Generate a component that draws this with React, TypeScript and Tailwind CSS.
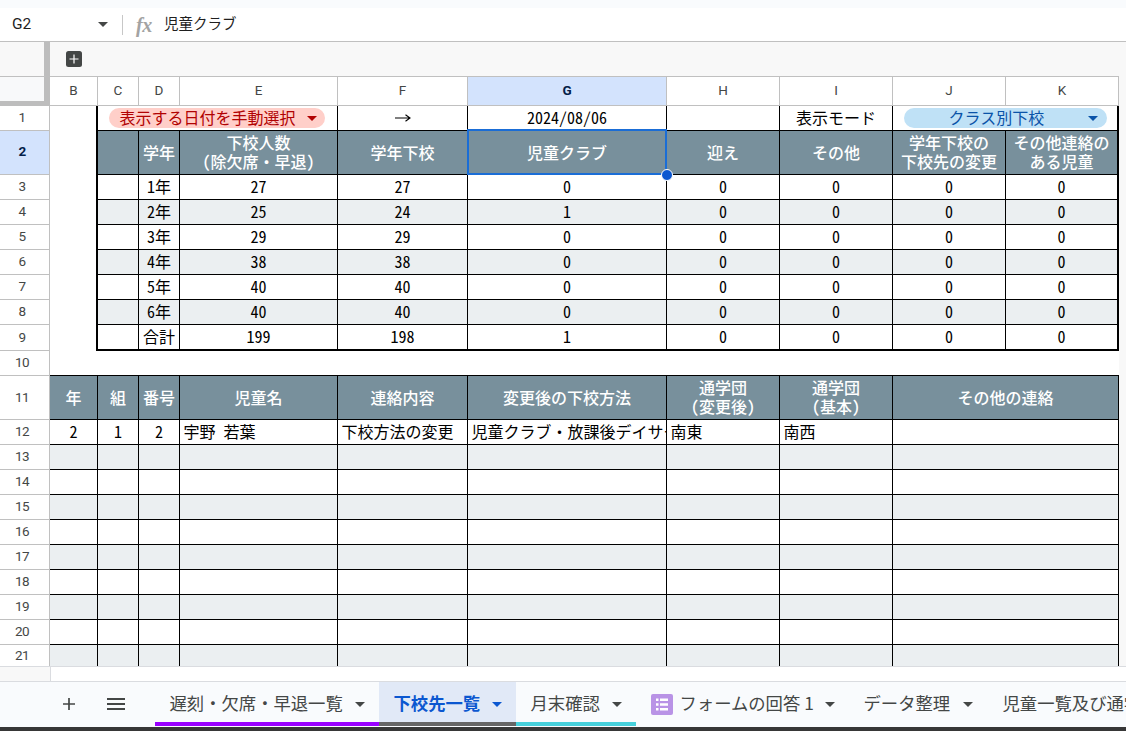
import React from "react";

type Align = "center" | "left";

const COLS =
  "grid grid-cols-[50px_48px_41px_41px_158px_130px_199px_113px_113px_113px_113px] w-[1119px] shrink-0";

const ROW_H = {
  normal: "h-[25px]",
  tall: "h-[44px]",
  total: "h-[26px]",
  last: "h-[21px]",
};

function Caret({ className = "" }: { className?: string }) {
  return (
    <svg viewBox="0 0 10 5" className={`h-[5px] w-[10px] shrink-0 ${className}`} fill="currentColor">
      <path d="M0 0h10L5 5z" />
    </svg>
  );
}

function RowHead({ n, selected = false, last = false }: { n: number; selected?: boolean; last?: boolean }) {
  return (
    <div
      className={`flex items-center justify-center border-r border-[#c0c0c0] pr-[5px] font-[Roboto,sans-serif] text-[13.5px] leading-none tracking-[-0.6px] ${
        last ? "pt-px" : "border-b"
      } ${selected ? "bg-[#d3e3fd] pb-[2px] font-bold text-[#041e49]" : "bg-white text-[#444746]"}`}
    >
      {n}
    </div>
  );
}

function Cell({
  children,
  align = "center",
  lift = true,
  className = "",
}: {
  children?: React.ReactNode;
  align?: Align;
  lift?: boolean;
  className?: string;
}) {
  return (
    <div
      className={`flex min-w-0 items-center overflow-hidden whitespace-nowrap border-black text-center text-[16px] leading-[19px] ${
        align === "center" ? "justify-center" : "justify-start pl-[3.5px]"
      } ${lift ? "pb-[2px]" : ""} ${className}`}
    >
      {children}
    </div>
  );
}

const HEAD_FILL = "bg-[#78909c] font-medium text-white";
const LINES = "border-r border-b";

function HeadCell({ children, className = "border-r border-b" }: { children?: React.ReactNode; className?: string }) {
  return (
    <Cell lift={false} className={`${HEAD_FILL} ${className}`}>
      {children}
    </Cell>
  );
}

function Two({ a, b }: { a: string; b: string }) {
  return (
    <span className="block pb-[2px]">
      {a}
      <br />
      {b}
    </span>
  );
}

const summary = [
  ["1年", "27", "27", "0", "0", "0", "0", "0"],
  ["2年", "25", "24", "1", "0", "0", "0", "0"],
  ["3年", "29", "29", "0", "0", "0", "0", "0"],
  ["4年", "38", "38", "0", "0", "0", "0", "0"],
  ["5年", "40", "40", "0", "0", "0", "0", "0"],
  ["6年", "40", "40", "0", "0", "0", "0", "0"],
  ["合計", "199", "198", "1", "0", "0", "0", "0"],
];

const letters = ["B", "C", "D", "E", "F", "G", "H", "I", "J", "K"];
const emptyRows = [13, 14, 15, 16, 17, 18, 19, 20, 21];

function FormulaBar() {
  return (
    <div className="flex h-[34px] shrink-0 items-center border-b border-[#c0c0c0] bg-white">
      <div className="w-[98px] pl-[12px] font-[Roboto,sans-serif] text-[15.5px] text-[#1f1f1f]">G2</div>
      <Caret className="text-[#444746]" />
      <div className="ml-[14px] h-[20px] w-px bg-[#c7c7c7]" />
      <span className="ml-[13px] w-[21px] font-['Liberation_Serif',serif] text-[20px] font-bold italic leading-none tracking-[-0.5px] text-[#a3a3a3]">
        fx
      </span>
      <span className="ml-[7px] pb-[3px] text-[14.5px] leading-none text-[#1f1f1f]">児童クラブ</span>
    </div>
  );
}

function GroupBar() {
  return (
    <div className="flex h-[34px] shrink-0 bg-[#f8f8f8]">
      <div className="w-[50px] border-r-[6px] border-[#bdbdbd]" />
      <div className="flex w-[48px] items-center justify-center pb-px">
        <svg viewBox="0 0 16 16" className="h-[16px] w-[16px]">
          <rect width="16" height="16" rx="2.5" fill="#444746" />
          <path d="M8 3.500v9M3.500 8h9" stroke="#fff" strokeWidth="1.2" />
        </svg>
      </div>
    </div>
  );
}

function ColumnHeads() {
  return (
    <div className={`${COLS} h-[30px]`}>
      <div className="border-t border-r-[6px] border-b-[5px] border-t-[#c0c0c0] border-r-[#bdbdbd] border-b-[#bdbdbd] bg-[#f8f9fa]" />
      {letters.map((l) => (
        <div
          key={l}
          className={`flex items-center justify-center border-t border-r border-b border-[#c0c0c0] pb-px font-[Roboto,sans-serif] text-[13.5px] leading-none ${
            l === "G" ? "bg-[#d3e3fd] font-bold text-[#041e49]" : "bg-white text-[#444746]"
          }`}
        >
          {l}
        </div>
      ))}
    </div>
  );
}

function Summary() {
  return (
    <>
      <div className={`${COLS} ${ROW_H.normal}`}>
        <RowHead n={1} />
        <Cell className="border-r-2" />
        <Cell lift={false} className={`col-span-3 pr-[2px] ${LINES}`}>
          <div className="flex h-[20px] w-[216px] items-center rounded-full bg-[#ffcfc9] pl-[11px] text-[#b10202]">
            <span className="pb-[2px]">表示する日付を手動選択</span>
            <Caret className="ml-[11px]" />
          </div>
        </Cell>
        <Cell lift={false} className={LINES}>
          <svg viewBox="0 0 16 8" className="h-[8px] w-[16px]" fill="none" stroke="#000" strokeWidth="1.1">
            <path d="M0 4h15M10.500 .8L15 4l-4.500 3.200" />
          </svg>
        </Cell>
        <Cell className={LINES}>2024/08/06</Cell>
        <Cell className={LINES} />
        <Cell className={LINES}>表示モード</Cell>
        <Cell lift={false} className="col-span-2 border-r-2 border-b">
          <div className="flex h-[20px] w-[203px] items-center rounded-full bg-[#bfe1f6] pl-[45px] text-[#0a53a8]">
            <span className="pb-[2px]">クラス別下校</span>
            <Caret className="ml-auto mr-[9px]" />
          </div>
        </Cell>
      </div>
      <div className={`${COLS} ${ROW_H.tall}`}>
        <RowHead n={2} selected />
        <Cell className="border-r-2" />
        <HeadCell />
        <HeadCell>学年</HeadCell>
        <HeadCell>
          <Two a="下校人数" b="（除欠席・早退）" />
        </HeadCell>
        <HeadCell>学年下校</HeadCell>
        <div className="relative grid">
          <HeadCell>児童クラブ</HeadCell>
          <div className="absolute -top-[2px] -left-px right-0 bottom-0 border-2 border-[#1a6dd6]" />
          <div className="absolute -right-[6px] -bottom-[6px] z-10 h-[12px] w-[12px] rounded-full border border-white bg-[#0b57d0]" />
        </div>
        <HeadCell>迎え</HeadCell>
        <HeadCell>その他</HeadCell>
        <HeadCell>
          <Two a="学年下校の" b="下校先の変更" />
        </HeadCell>
        <HeadCell className="border-r-2 border-b">
          <Two a="その他連絡の" b="ある児童" />
        </HeadCell>
      </div>
      {summary.map((row, i) => {
        const total = i === 6;
        const bg = i % 2 === 1 ? "bg-[#ebeff1]" : "bg-white";
        const bottom = total ? "border-b-2" : "border-b";
        return (
          <div key={i} className={`${COLS} ${total ? ROW_H.total : ROW_H.normal}`}>
            <RowHead n={i + 3} />
            <Cell className="border-r-2" />
            <Cell className={`border-r ${bottom} ${bg}`} />
            {row.map((v, j) => (
              <Cell key={j} className={`${j === 7 ? "border-r-2" : "border-r"} ${bottom} ${bg}`}>
                {v}
              </Cell>
            ))}
          </div>
        );
      })}
    </>
  );
}

function Detail() {
  return (
    <>
      <div className={`${COLS} ${ROW_H.normal}`}>
        <RowHead n={10} />
        <Cell className="col-span-10 border-b" />
      </div>
      <div className={`${COLS} ${ROW_H.tall}`}>
        <RowHead n={11} />
        <HeadCell>年</HeadCell>
        <HeadCell>組</HeadCell>
        <HeadCell>番号</HeadCell>
        <HeadCell>児童名</HeadCell>
        <HeadCell>連絡内容</HeadCell>
        <HeadCell>変更後の下校方法</HeadCell>
        <HeadCell>
          <Two a="通学団" b="（変更後）" />
        </HeadCell>
        <HeadCell>
          <Two a="通学団" b="（基本）" />
        </HeadCell>
        <HeadCell className="col-span-2 border-r border-b">その他の連絡</HeadCell>
      </div>
      <div className={`${COLS} ${ROW_H.normal}`}>
        <RowHead n={12} />
        <Cell className={LINES}>2</Cell>
        <Cell className={LINES}>1</Cell>
        <Cell className={LINES}>2</Cell>
        <Cell align="left" className={LINES}>宇野 若葉</Cell>
        <Cell align="left" className={LINES}>下校方法の変更</Cell>
        <Cell align="left" className={LINES}>児童クラブ・放課後デイサービス</Cell>
        <Cell align="left" className={LINES}>南東</Cell>
        <Cell align="left" className={LINES}>南西</Cell>
        <Cell className={`col-span-2 ${LINES}`} />
      </div>
      {emptyRows.map((n) => {
        const last = n === 21;
        const cls = `${last ? "border-r" : LINES} ${n % 2 ? "bg-[#ebeff1]" : "bg-white"}`;
        return (
          <div key={n} className={`${COLS} ${last ? ROW_H.last : ROW_H.normal}`}>
            <RowHead n={n} last={last} />
            {[0, 1, 2, 3, 4, 5, 6, 7].map((c) => (
              <Cell key={c} className={cls} />
            ))}
            <Cell className={`col-span-2 ${cls}`} />
          </div>
        );
      })}
    </>
  );
}

function Tab({ label, className, icon }: { label: string; className: string; icon?: React.ReactNode }) {
  return (
    <div className={`flex h-[44px] shrink-0 items-center border-b-4 pt-px pl-[14.5px] ${className}`}>
      {icon}
      <span className="whitespace-nowrap text-[17.33px] leading-none">{label}</span>
      <Caret className="ml-auto mt-[3px]" />
    </div>
  );
}

function FormIcon() {
  return (
    <svg viewBox="0 0 22 21" className="mt-[3px] mr-[7px] h-[21px] w-[22px] shrink-0">
      <rect width="22" height="21" rx="2" fill="#b993e6" />
      <path
        d="M5 4.500h2.500v2.500H5zM9 4.500h8v2.500H9zM5 9.200h2.500v2.500H5zM9 9.200h8v2.500H9zM5 14h2.500v2.500H5zM9 14h8v2.500H9z"
        fill="#fff"
      />
    </svg>
  );
}

function TabBar() {
  return (
    <div className="flex h-[46px] shrink-0 border-t border-[#dadce0] bg-[#f9fbfd] text-[#444746]">
      <div className="flex w-[155px] shrink-0 items-center pb-[2px]">
        <svg viewBox="0 0 12 12" className="ml-[63px] h-[12px] w-[12px]" stroke="currentColor" strokeWidth="1.7">
          <path d="M6 0v12M0 6h12" />
        </svg>
        <svg viewBox="0 0 18 12" className="ml-[32px] h-[12px] w-[18px]" stroke="currentColor" strokeWidth="1.8">
          <path d="M0 1h18M0 6h18M0 11h18" />
        </svg>
      </div>
      <Tab label="遅刻・欠席・早退一覧" className="w-[224px] border-[#9900ff] pr-[14px]" />
      <Tab label="下校先一覧" className="w-[137px] border-[#666666] bg-[#e1e9f7] pr-[14px] font-bold text-[#0b57d0]" />
      <Tab label="月末確認" className="w-[120px] border-[#46d0db] pr-[14px]" />
      <Tab label="フォームの回答 1" icon={<FormIcon />} className="w-[213px] border-transparent pr-[14px]" />
      <Tab label="データ整理" className="w-[139px] border-transparent pr-[15px]" />
      <Tab label="児童一覧及び通学団" className="w-[220px] border-transparent pr-[14px]" />
    </div>
  );
}

export default function App() {
  return (
    <div className="flex h-[731px] w-[1126px] flex-col overflow-hidden bg-[#f8f8f8] font-['Noto_Sans_CJK_JP',sans-serif] text-black">
      <div className="h-[8px] shrink-0 bg-[#f9fbfd]" />
      <FormulaBar />
      <GroupBar />
      <div className="flex w-[1119px] shrink-0 flex-col bg-white [font-feature-settings:'hwid']">
        <ColumnHeads />
        <Summary />
        <Detail />
      </div>
      <div className="flex h-[15px] shrink-0 border-t border-[#dadce0] bg-white">
        <div className="h-[14px] w-[51px] border-r border-[#dadce0] bg-[#f8f8f8]" />
      </div>
      <TabBar />
      <div className="h-[4px] shrink-0 bg-[#373737]" />
    </div>
  );
}
